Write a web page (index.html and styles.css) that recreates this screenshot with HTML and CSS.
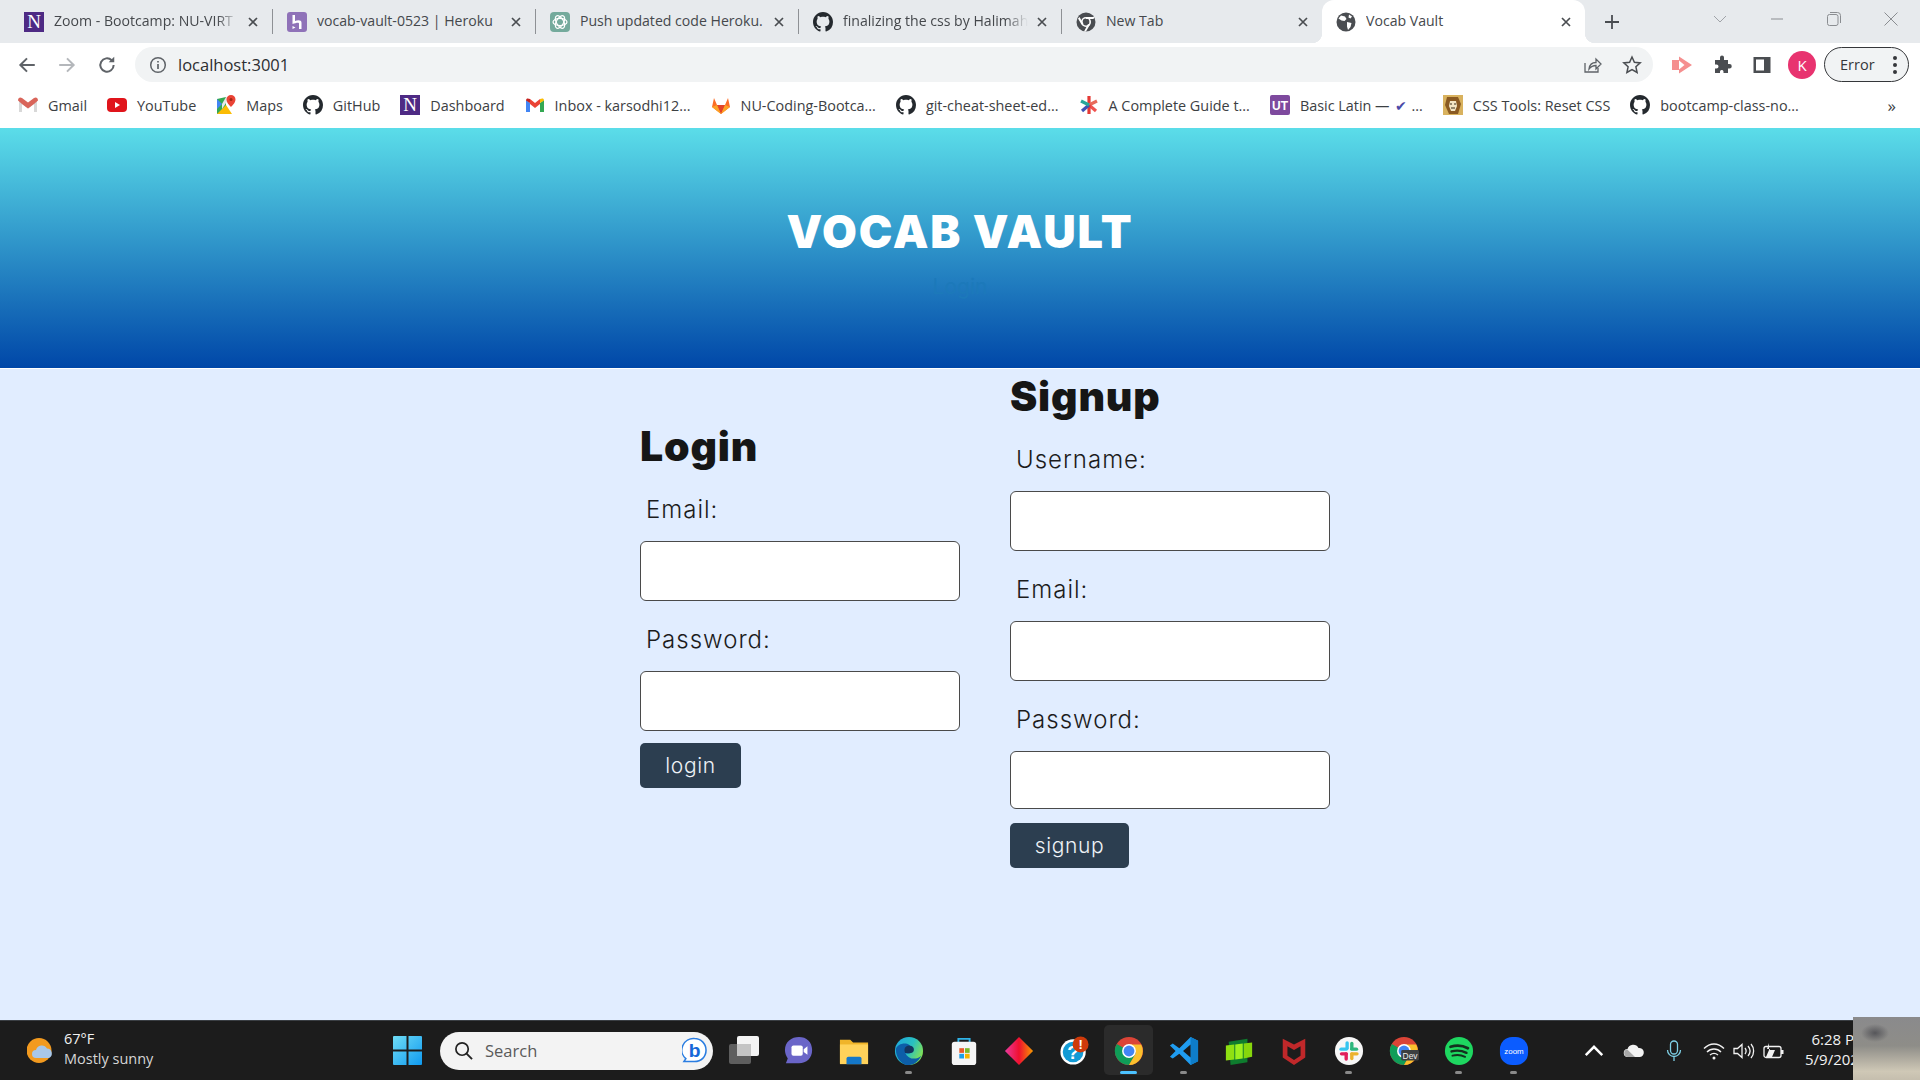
FILE: index.html
```html
<!DOCTYPE html>
<html lang="en">
<head>
    <meta charset="UTF-8">
    <title>Vocab Vault</title>
    <link rel="stylesheet" href="styles.css">
</head>
<body>
    <svg class="icon-defs" width="0" height="0">
        <defs>
            <symbol id="i-github" viewBox="0 0 16 16">
                <path fill="#24292e" d="M8 0C3.58 0 0 3.58 0 8c0 3.54 2.29 6.53 5.47 7.59.4.07.55-.17.55-.38 0-.19-.01-.82-.01-1.49-2.01.37-2.53-.49-2.69-.94-.09-.23-.48-.94-.82-1.13-.28-.15-.68-.52-.01-.53.63-.01 1.08.58 1.23.82.72 1.21 1.87.87 2.33.66.07-.52.28-.87.51-1.07-1.78-.2-3.64-.89-3.64-3.95 0-.87.31-1.59.82-2.15-.08-.2-.36-1.02.08-2.12 0 0 .67-.21 2.2.82.64-.18 1.32-.27 2-.27.68 0 1.36.09 2 .27 1.53-1.04 2.2-.82 2.2-.82.44 1.1.16 1.92.08 2.12.51.56.82 1.27.82 2.15 0 3.07-1.87 3.75-3.65 3.95.29.25.54.73.54 1.48 0 1.07-.01 1.93-.01 2.2 0 .21.15.46.55.38A8.013 8.013 0 0016 8c0-4.42-3.58-8-8-8z"/>
            </symbol>
            <symbol id="i-close" viewBox="0 0 12 12">
                <path d="M2 2l8 8M10 2l-8 8" stroke="#4a4d51" stroke-width="1.7" fill="none"/>
            </symbol>
            <symbol id="i-chrome" viewBox="0 0 32 32">
                <circle cx="16" cy="16" r="15" fill="#db4437"/>
                <path d="M16 16L3 8.5A15 15 0 0 0 16 31l7.5-13z" fill="#0f9d58"/>
                <path d="M16 9h13a15 15 0 0 1-13 22l7.5-13z" fill="#fbc02d"/>
                <circle cx="16" cy="16" r="7.4" fill="#fff"/>
                <circle cx="16" cy="16" r="5.8" fill="#4285f4"/>
            </symbol>
        </defs>
    </svg>

    <!-- Browser tabs -->
    <div class="tabstrip">
        <div class="tab tab-first">
            <svg class="tab-icon" viewBox="0 0 20 20"><rect width="20" height="20" fill="#4e2a84"/><text x="10" y="16" class="nu-letter">N</text></svg>
            <span class="tab-title tab-title-fade">Zoom - Bootcamp: NU-VIRT</span>
            <svg class="tab-close"><use href="#i-close"/></svg>
        </div>
        <span class="tab-sep"></span>
        <div class="tab">
            <svg class="tab-icon" viewBox="0 0 20 20"><rect width="20" height="20" rx="3" fill="#8f72b8"/><path d="M5.500 3h2.500v6c2.500-1 6.500-1.500 6.500 1.800V17H12v-5.500c0-1.500-3-.8-6.500.5zM5.500 14l3 1.500-3 1.500z" fill="#fff"/></svg>
            <span class="tab-title">vocab-vault-0523 | Heroku</span>
            <svg class="tab-close"><use href="#i-close"/></svg>
        </div>
        <span class="tab-sep"></span>
        <div class="tab">
            <svg class="tab-icon" viewBox="0 0 20 20"><rect width="20" height="20" rx="4" fill="#74aa9c"/><g fill="none" stroke="#fff" stroke-width="1.200"><ellipse cx="10" cy="10" rx="7" ry="3.600"/><ellipse cx="10" cy="10" rx="7" ry="3.600" transform="rotate(60 10 10)"/><ellipse cx="10" cy="10" rx="7" ry="3.600" transform="rotate(120 10 10)"/></g></svg>
            <span class="tab-title">Push updated code Heroku.</span>
            <svg class="tab-close"><use href="#i-close"/></svg>
        </div>
        <span class="tab-sep"></span>
        <div class="tab">
            <svg class="tab-icon"><use href="#i-github"/></svg>
            <span class="tab-title tab-title-fade">finalizing the css by Halimah</span>
            <svg class="tab-close"><use href="#i-close"/></svg>
        </div>
        <span class="tab-sep"></span>
        <div class="tab tab-newtab">
            <svg class="tab-icon" viewBox="0 0 20 20"><circle cx="10" cy="10" r="9.500" fill="#4a4d51"/><circle cx="10" cy="10" r="5" fill="#fff"/><circle cx="10" cy="10" r="3.400" fill="#4a4d51"/><path d="M10 5h8.500l-1 2H10zM5.500 12.500L2 6.500l1.500-1.500 4 7zM14 12.500L10 19.500H8l4-7.500z" fill="#fff"/></svg>
            <span class="tab-title">New Tab</span>
            <svg class="tab-close"><use href="#i-close"/></svg>
        </div>
        <div class="tab tab-active">
            <svg class="tab-icon" viewBox="0 0 20 20"><circle cx="10" cy="10" r="9.500" fill="#4a4d51"/><path d="M5 3.500l4 1 1.500 2.500-2 2-3-.5-3-2zM11 10l4.500 1-1 4-2.500 3-1-3.500zM13 2.500l3 2-1.500 2-2-1z" fill="#fff"/></svg>
            <span class="tab-title">Vocab Vault</span>
            <svg class="tab-close"><use href="#i-close"/></svg>
        </div>
        <span class="tab-new">
            <svg viewBox="0 0 16 16"><path d="M8 1v14M1 8h14" stroke="#4a4d51" stroke-width="1.800"/></svg>
        </span>
        <div class="window-controls">
            <span class="window-btn"><svg viewBox="0 0 14 14"><path d="M1 4l6 6 6-6" stroke="#a0a3a8" fill="none"/></svg></span>
            <span class="window-btn"><svg viewBox="0 0 14 14"><path d="M1 7h12" stroke="#8a8d91" fill="none"/></svg></span>
            <span class="window-btn"><svg viewBox="0 0 14 14"><rect x=".5" y="2.500" width="10.500" height="11" rx="2" stroke="#8a8d91" fill="none"/><path d="M3 .5h7.500a3 3 0 0 1 3 3V11" stroke="#8a8d91" fill="none"/></svg></span>
            <span class="window-btn"><svg viewBox="0 0 14 14"><path d="M.5.5l13 13M13.500.5l-13 13" stroke="#8a8d91" fill="none"/></svg></span>
        </div>
    </div>

    <!-- Address bar -->
    <div class="toolbar">
        <div class="nav-btns">
            <span class="nav-btn"><svg viewBox="0 0 18 18"><path d="M16 9H3M9 3L3 9l6 6" stroke="#5f6368" stroke-width="1.800" fill="none"/></svg></span>
            <span class="nav-btn"><svg viewBox="0 0 18 18"><path d="M2 9h13M9 3l6 6-6 6" stroke="#b4b7bb" stroke-width="1.800" fill="none"/></svg></span>
            <span class="nav-btn"><svg viewBox="0 0 18 18"><path d="M15 9a6 6 0 1 1-1.800-4.300" stroke="#5f6368" stroke-width="1.800" fill="none"/><path d="M15.500 1.500v5h-5z" fill="#5f6368"/></svg></span>
        </div>
        <div class="omnibox">
            <svg class="omnibox-info" viewBox="0 0 18 18"><circle cx="9" cy="9" r="7.300" stroke="#5f6368" stroke-width="1.500" fill="none"/><path d="M9 8v5M9 5v1.600" stroke="#5f6368" stroke-width="1.700"/></svg>
            <span class="omnibox-url">localhost:3001</span>
            <span class="omnibox-action"><svg viewBox="0 0 20 20"><path d="M3 8v9h13v-4" stroke="#5f6368" stroke-width="1.300" fill="none"/><path d="M7 14c.5-4 3-6.500 7-6.500V4l5 5-5 5v-3.500c-3 0-5 1-7 3.500z" stroke="#5f6368" stroke-width="1.300" fill="none"/></svg></span>
            <span class="omnibox-action"><svg viewBox="0 0 20 20"><path d="M10 2l2.400 5.300 5.800.6-4.300 3.900 1.200 5.700-5.100-2.900-5.100 2.900 1.200-5.700-4.300-3.900 5.800-.6z" stroke="#4a4d51" stroke-width="1.500" fill="none"/></svg></span>
        </div>
        <div class="toolbar-right">
            <span class="nav-btn"><svg viewBox="0 0 20 20"><path d="M0 5h7V1.500L20 10 7 18.500V15H0z" fill="#f58f8f"/><path d="M7 5.500v9l5.500-4.500z" fill="#fff"/></svg></span>
            <span class="nav-btn"><svg viewBox="0 0 20 20"><path d="M8 2.500a2 2 0 0 1 4 0V5h4v4h1.500a2.200 2.200 0 0 1 0 4.500H16V18h-4.500v-1.500a1.800 1.800 0 0 0-3.500 0V18H3v-4.500h1.500a2 2 0 0 0 0-4H3V5h5z" fill="#4a4d51"/></svg></span>
            <span class="nav-btn"><svg viewBox="0 0 20 20"><rect x="1.500" y="2" width="17" height="16" fill="#4a4d51"/><rect x="4" y="4.500" width="8" height="11" fill="#fff"/></svg></span>
            <span class="avatar">K</span>
            <span class="error-pill">Error<span class="error-dots"><i></i><i></i><i></i></span></span>
        </div>
    </div>

    <!-- Bookmarks -->
    <div class="bookmarks">
        <a class="bookmark"><svg viewBox="0 0 20 16"><path d="M1 15V2l9 7 9-7v13h-3V7l-6 4.600L4 7v8z" fill="#d8d8d8"/><path d="M0 3.500C0 .8 2-.3 4 1l6 4.600L16 1c2-1.300 4-.2 4 2.500L16 7l-6 4.600L4 7z" fill="#d9655a"/></svg>Gmail</a>
        <a class="bookmark"><svg viewBox="0 0 20 20"><rect y="3" width="20" height="14" rx="4" fill="#e0141b"/><path d="M8 7l5 3-5 3z" fill="#fff"/></svg>YouTube</a>
        <a class="bookmark"><svg viewBox="0 0 20 20"><path d="M1 4l9-2v16l-9 1z" fill="#34a853"/><path d="M1 19l9-9 6 9z" fill="#fbbc04"/><path d="M1 4l5 5-5 5z" fill="#4285f4"/><path d="M6 9l4-7h4l-8 12z" fill="#e8e8e8"/><path d="M15 0a4.500 4.500 0 0 0-4.500 4.500C10.500 8 15 12 15 12s4.500-4 4.500-7.500A4.500 4.500 0 0 0 15 0z" fill="#ea4335"/><circle cx="15" cy="4.500" r="1.500" fill="#a52714"/></svg>Maps</a>
        <a class="bookmark"><svg><use href="#i-github"/></svg>GitHub</a>
        <a class="bookmark"><svg viewBox="0 0 20 20"><rect width="20" height="20" fill="#4e2a84"/><text x="10" y="16" class="nu-letter">N</text></svg>Dashboard</a>
        <a class="bookmark"><svg viewBox="0 0 20 16"><path d="M1 15V3l4 3v9z" fill="#4285f4"/><path d="M15 15V6l4-3v12z" fill="#34a853"/><path d="M15 2v5l-5 4-5-4V2l5 4z" fill="#ea4335"/><path d="M1 3.500C1 1 3 1 5 2v4z" fill="#c5221f"/><path d="M15 2c2-1 4-1 4 1.500L15 6z" fill="#fbbc04"/></svg>Inbox - karsodhi12...</a>
        <a class="bookmark"><svg viewBox="0 0 20 20"><path d="M10 19L1 12l2-9 3 7h8l3-7 2 9z" fill="#fc6d26"/><path d="M10 19l-4-9h8z" fill="#e24329"/><path d="M1 12l5-2 4 9zM19 12l-5-2-4 9z" fill="#fca326"/></svg>NU-Coding-Bootca...</a>
        <a class="bookmark"><svg><use href="#i-github"/></svg>git-cheat-sheet-ed...</a>
        <a class="bookmark"><svg viewBox="0 0 20 20"><g stroke-width="3.200"><path d="M10 10V1" stroke="#e53935"/><path d="M10 10l8-4" stroke="#e86a5a"/><path d="M10 10l7 6" stroke="#ef5350"/><path d="M10 10v9" stroke="#e53935"/><path d="M10 10l-7 6" stroke="#3f51b5"/><path d="M10 10L2 6" stroke="#26a69a"/></g></svg>A Complete Guide t...</a>
        <a class="bookmark"><svg viewBox="0 0 20 20"><rect width="20" height="20" rx="2" fill="#7e4a9e"/><text x="10" y="15" class="ut-letters">UT</text></svg>Basic Latin — <span class="bookmark-check">✔</span> ...</a>
        <a class="bookmark"><svg viewBox="0 0 20 20"><rect width="20" height="20" fill="#d9b25e"/><path d="M4 2h11l3 7-3 10H6L2 10z" fill="#8a5a22"/><path d="M7 6h6l1 5-2 5H8l-2-5z" fill="#f3e6c4"/><path d="M7 9h2M11 9h2M8 13h4" stroke="#3a2c18" stroke-width="1.200"/></svg>CSS Tools: Reset CSS</a>
        <a class="bookmark"><svg><use href="#i-github"/></svg>bootcamp-class-no...</a>
        <span class="bookmarks-more">»</span>
    </div>

    <!-- Page -->
    <header class="site-header">
        <h1 class="site-title">VOCAB VAULT</h1>
        <a class="site-link">Login</a>
    </header>

    <main class="auth">
        <form class="auth-form auth-form-login">
            <h2 class="form-title">Login</h2>
            <div class="field">
                <label class="field-label">Email:</label>
                <input class="field-input" type="text">
            </div>
            <div class="field">
                <label class="field-label">Password:</label>
                <input class="field-input" type="password">
            </div>
            <button class="form-btn form-btn-login" type="button">login</button>
        </form>
        <form class="auth-form">
            <h2 class="form-title">Signup</h2>
            <div class="field">
                <label class="field-label">Username:</label>
                <input class="field-input" type="text">
            </div>
            <div class="field">
                <label class="field-label">Email:</label>
                <input class="field-input" type="text">
            </div>
            <div class="field">
                <label class="field-label">Password:</label>
                <input class="field-input field-input-short" type="password">
            </div>
            <button class="form-btn form-btn-signup" type="button">signup</button>
        </form>
    </main>

    <!-- Windows taskbar -->
    <footer class="taskbar">
        <div class="weather">
            <svg class="weather-icon" viewBox="0 0 27 27"><circle cx="12" cy="13.500" r="12.500" fill="#f29a1f"/><path d="M9 21a4 4 0 0 1 0-8 6 6 0 0 1 11-1.500A5 5 0 0 1 22 21z" fill="#a9c7e8"/></svg>
            <div class="weather-text">
                <span class="weather-temp">67°F</span>
                <span class="weather-desc">Mostly sunny</span>
            </div>
        </div>
        <span class="start-btn">
            <svg viewBox="0 0 29 29"><defs><linearGradient id="win" x1="0" y1="0" x2="1" y2="1"><stop offset="0" stop-color="#6fdcf5"/><stop offset="1" stop-color="#0f9af0"/></linearGradient></defs><path d="M0 1a1 1 0 0 1 1-1h12.500v13.500H0zM15.500 0H28a1 1 0 0 1 1 1v12.500H15.500zM0 15.500h13.500V29H1a1 1 0 0 1-1-1zM15.500 15.500H29V28a1 1 0 0 1-1 1H15.500z" fill="url(#win)"/></svg>
        </span>
        <div class="task-search">
            <svg class="task-search-icon" viewBox="0 0 20 20"><circle cx="8.500" cy="8.500" r="6.500" stroke="#222" stroke-width="1.800" fill="none"/><path d="M13 13l6 6" stroke="#222" stroke-width="2"/></svg>
            <span class="task-search-text">Search</span>
            <svg class="task-search-bing" viewBox="0 0 26 28"><path d="M13 1a12 12 0 0 1 12 12c0 7-5 12-12 12H2l2-3A12 12 0 0 1 13 1z" fill="#fff" stroke="#2a7de1" stroke-width="1.600"/><text x="13" y="20" class="bing-letter">b</text></svg>
        </div>
        <div class="task-apps">
            <span class="task-app"><svg viewBox="0 0 30 30"><rect y="8" width="22" height="20" rx="2" fill="#5e5e5e"/><rect x="8" width="22" height="20" rx="2" fill="#f4f4f4"/><rect x="8" y="8" width="14" height="12" fill="#c4c4c4"/></svg></span>
            <span class="task-app"><svg viewBox="0 0 32 32"><path d="M16 1c8 0 14 5 14 14s-6 14-14 14H2l2-5c-2-3-3-6-3-9C1 6 8 1 16 1z" fill="#6a65c8"/><rect x="8" y="10" width="12" height="11" rx="2" fill="#fff"/><path d="M21 14l4-3v9l-4-3z" fill="#fff"/></svg></span>
            <span class="task-app"><svg viewBox="0 0 32 32"><path d="M1 4h11l3 3h16v22H1z" fill="#f0b429"/><path d="M1 9h30v21H1z" fill="#ffd25a"/><path d="M10 22h12a2 2 0 0 1 2 2v6H8v-6a2 2 0 0 1 2-2z" fill="#1477c9"/></svg></span>
            <span class="task-app task-app-open"><svg viewBox="0 0 32 32"><defs><linearGradient id="edge" x1="0" y1="0" x2="1" y2=".5"><stop offset="0" stop-color="#1da5e0"/><stop offset=".6" stop-color="#29c0c0"/><stop offset="1" stop-color="#7ce05c"/></linearGradient></defs><circle cx="16" cy="16" r="15" fill="url(#edge)"/><path d="M2 14c2-7 16-9 17 1 .3 3-4 5-7 3 3 7 12 8 17 3-3 7-9 10-14 10C9 31 2 24 2 14z" fill="#0d5ea8"/><path d="M12 18c-2-4 0-8 4-8s6 3 5 6c-1 2-4 3-6 2z" fill="#13355f"/></svg></span>
            <span class="task-app"><svg viewBox="0 0 32 32"><path d="M10 8V3h12v5" stroke="#2fb4e8" stroke-width="2" fill="none"/><rect x="3" y="6" width="26" height="25" rx="3" fill="#f5f5f5"/><rect x="11" y="13" width="5" height="5" fill="#ea5a2a"/><rect x="17" y="13" width="5" height="5" fill="#7cb928"/><rect x="11" y="19" width="5" height="5" fill="#1ea0e8"/><rect x="17" y="19" width="5" height="5" fill="#f7b500"/></svg></span>
            <span class="task-app"><svg viewBox="0 0 32 32"><defs><linearGradient id="diamond" x1="0" y1="0" x2="1" y2="0"><stop offset="0" stop-color="#ea3a9f"/><stop offset=".5" stop-color="#f0102f"/><stop offset="1" stop-color="#f79a00"/></linearGradient></defs><path d="M16 1l15 15-15 15L1 16z" fill="url(#diamond)"/></svg></span>
            <span class="task-app"><svg viewBox="0 0 32 32"><circle cx="15" cy="17" r="13.500" fill="#fff"/><circle cx="15" cy="17" r="11" fill="#139bd6"/><text x="15" y="24" class="help-letter">?</text><circle cx="23" cy="9" r="8.500" fill="#cf3a0a"/><text x="23" y="14" class="badge-letter">!</text></svg></span>
            <span class="task-app task-app-active"><svg><use href="#i-chrome"/></svg></span>
            <span class="task-app task-app-open"><svg viewBox="0 0 32 32"><path d="M23 1l8 4v22l-8 4-12-12-7 5-3-2 6-6-6-6 3-2 7 5z" fill="#1f9cf0"/><path d="M23 1v30l8-4V5z" fill="#0e7dc9"/><path d="M23 9l-8 7 8 7z" fill="#1a1a1a"/></svg></span>
            <span class="task-app"><svg viewBox="0 0 32 32"><path d="M5 6l20-3v25L7 31z" fill="#0e7c2e"/><path d="M2 10l9-1v16l-9 1z" fill="#8fe012"/><path d="M12 9l8-1v16l-8 1z" fill="#9cf01e"/><path d="M21 8l9-1v15l-9 2z" fill="#86d60c"/></svg></span>
            <span class="task-app"><svg viewBox="0 0 32 32"><path d="M4 3l12 6 12-6v20l-12 8-12-8zM9 11v10l7 4.500 7-4.500V11l-7 4z" fill="#c0282a" fill-rule="evenodd"/></svg></span>
            <span class="task-app task-app-open"><svg viewBox="0 0 32 32"><circle cx="16" cy="16" r="15" fill="#f7f7f7"/><g stroke-width="3.600" stroke-linecap="round"><path d="M14 7.500v5.500" stroke="#36c5f0"/><path d="M7.500 14H13" stroke="#36c5f0"/><path d="M19 8v5.500" stroke="#2eb67d"/><path d="M19 14h5" stroke="#2eb67d"/><path d="M19 19h5.500" stroke="#ecb22e"/><path d="M19 19v5" stroke="#ecb22e"/><path d="M13 19H8" stroke="#e01e5a"/><path d="M13 19v5.500" stroke="#e01e5a"/></g></svg></span>
            <span class="task-app"><svg viewBox="0 0 32 32"><use href="#i-chrome" width="32" height="32"/><rect x="13" y="15" width="19" height="11" rx="1.500" fill="#3c3f41"/><text x="22.500" y="24" class="dev-letters">Dev</text></svg></span>
            <span class="task-app task-app-open"><svg viewBox="0 0 32 32"><circle cx="16" cy="16" r="15" fill="#1ed760"/><g stroke="#14301f" fill="none" stroke-linecap="round"><path d="M7 11.500c6-2 13-1.500 18.500 1.500" stroke-width="3"/><path d="M8 16.500c5-1.500 11-1 16 1.500" stroke-width="2.500"/><path d="M9 21c4.500-1.200 9.500-.8 13.500 1.200" stroke-width="2"/></g></svg></span>
            <span class="task-app task-app-open"><svg viewBox="0 0 32 32"><rect x="1" y="1" width="30" height="30" rx="13" fill="#0b5cff"/><text x="16" y="19" class="zoom-letters">zoom</text></svg></span>
        </div>
        <div class="tray">
            <span class="tray-icon"><svg viewBox="0 0 16 16"><path d="M2 11l6-6 6 6" stroke="#fff" stroke-width="1.800" fill="none"/></svg></span>
            <span class="tray-icon"><svg viewBox="0 0 22 14"><path d="M5 13a4 4 0 0 1-.5-8A6 6 0 0 1 15.500 4 4.500 4.500 0 0 1 17 13z" fill="#f2f2f2"/><path d="M5 13a4 4 0 0 1-1-7.800L12 13z" fill="#a8a8a8"/></svg></span>
            <span class="tray-icon"><svg viewBox="0 0 16 22"><rect x="4.500" y="1" width="7" height="13" rx="3.500" stroke="#7fd0e6" stroke-width="1.300" fill="none"/><path d="M1.500 10a6.500 6.500 0 0 0 13 0M8 16.500V21" stroke="#7fd0e6" stroke-width="1.300" fill="none"/></svg></span>
            <div class="tray-group">
                <span class="tray-icon"><svg viewBox="0 0 22 18"><g stroke="#f2f2f2" stroke-width="1.400" fill="none"><path d="M1 6.500c6-6 14-6 20 0"/><path d="M4 10c4-4 10-4 14 0"/><path d="M7 13c2.500-2 5.500-2 8 0"/></g><circle cx="11" cy="16" r="1.500" fill="#f2f2f2"/></svg></span>
                <span class="tray-icon"><svg viewBox="0 0 22 18"><path d="M1 6.500h3.500L9 2.500v13l-4.500-4H1z" stroke="#f2f2f2" stroke-width="1.300" fill="none"/><path d="M12 6c1.500 2 1.500 4 0 6M15 4c2.500 3 2.500 7 0 10M18 2c3.500 4 3.500 10 0 14" stroke="#f2f2f2" stroke-width="1.300" fill="none"/></svg></span>
                <span class="tray-icon"><svg viewBox="0 0 22 16"><rect x="1" y="3.500" width="17" height="11" rx="2" stroke="#f2f2f2" stroke-width="1.300" fill="none"/><rect x="18" y="7" width="2.500" height="4" fill="#f2f2f2"/><path d="M3 14l3-7h6l-3 7zM6 0l-2 6h3l-1 3" fill="#f2f2f2"/></svg></span>
            </div>
        </div>
        <div class="clock">
            <span>6:28 PM</span>
            <span>5/9/2023</span>
        </div>
        <div class="peek-thumb"></div>
    </footer>
</body>
</html>
```

FILE: styles.css
```css
:root {
    --tab-bg: #e7eaed;
    --omni-bg: #f1f3f4;
    --chrome-text: #45484c;
    --page-bg: #e1edff;
    --dark-btn: #2c3e50;
    --ink: #161616;
    --task-bg: #1c1c1c;
}

* {
    margin: 0;
    padding: 0;
    box-sizing: border-box;
}

body {
    height: 100vh;
    display: flex;
    flex-direction: column;
    overflow: hidden;
    background-color: var(--page-bg);
    font-family: 'Open Sans', 'Noto Sans', sans-serif;
}

.icon-defs {
    position: absolute;
}

/* Tabs */
.tabstrip {
    display: flex;
    align-items: center;
    height: 43px;
    padding-left: 10px;
    background-color: var(--tab-bg);
}

.tab {
    position: relative;
    display: flex;
    align-items: center;
    width: 262px;
    height: 43px;
    padding: 0 13px 0 14px;
    color: var(--chrome-text);
    font-size: 14.1px;
}

.tab-newtab {
    width: 260px;
}

.tab-active {
    width: 263px;
    background-color: #fff;
    border-radius: 12px 12px 0 0;
}

.tab-active::before,
.tab-active::after {
    content: "";
    position: absolute;
    bottom: 0;
    width: 10px;
    height: 10px;
}

.tab-active::before {
    left: -10px;
    background: radial-gradient(circle at 0 0, var(--tab-bg) 10px, #fff 10.5px);
}

.tab-active::after {
    right: -10px;
    background: radial-gradient(circle at 100% 0, var(--tab-bg) 10px, #fff 10.5px);
}

.tab-icon {
    flex: none;
    width: 20px;
    height: 20px;
    margin-right: 10px;
}

.tab-title {
    flex: 1;
    margin-top: -2px;
    overflow: hidden;
    white-space: nowrap;
}

.tab-title-fade {
    -webkit-mask-image: linear-gradient(to right, #000 88%, transparent);
    mask-image: linear-gradient(to right, #000 88%, transparent);
}

.tab-close {
    flex: none;
    width: 12px;
    height: 12px;
    margin-left: 8px;
}

.tab-sep {
    flex: none;
    width: 1px;
    height: 25px;
    background-color: #8e9195;
}

.tab-new {
    display: flex;
    margin-left: 19px;
}

.tab-new svg {
    width: 16px;
    height: 16px;
}

.window-controls {
    display: flex;
    margin-left: auto;
    margin-right: 1px;
}

.window-btn {
    display: flex;
    justify-content: center;
    width: 57px;
    margin-top: -6px;
}

.window-btn svg {
    width: 14px;
    height: 14px;
}

.nu-letter {
    fill: #fff;
    font-family: 'Liberation Serif', serif;
    font-size: 19px;
    text-anchor: middle;
}

.ut-letters {
    fill: #fff;
    font-family: 'Liberation Sans', sans-serif;
    font-size: 12px;
    font-weight: 700;
    text-anchor: middle;
}

/* Toolbar */
.toolbar {
    display: flex;
    align-items: center;
    height: 43px;
    padding-left: 7px;
    background-color: #fff;
}

.nav-btns {
    display: flex;
    margin-right: 8px;
}

.nav-btn {
    display: flex;
    justify-content: center;
    align-items: center;
    width: 40px;
    height: 35px;
}

.nav-btn svg {
    width: 20px;
    height: 20px;
}

.omnibox {
    flex: 1;
    display: flex;
    align-items: center;
    height: 35px;
    padding: 0 1px 0 14px;
    background-color: var(--omni-bg);
    border-radius: 18px;
}

.omnibox-info {
    width: 18px;
    height: 18px;
    margin-right: 11px;
}

.omnibox-url {
    flex: 1;
    color: #2c2e31;
    font-size: 16.5px;
}

.omnibox-action {
    display: flex;
    justify-content: center;
    width: 40px;
}

.omnibox-action svg {
    width: 20px;
    height: 20px;
}

.toolbar-right {
    display: flex;
    align-items: center;
    width: 267px;
    padding-left: 9px;
}

.avatar {
    display: flex;
    justify-content: center;
    align-items: center;
    width: 28px;
    height: 28px;
    margin: 0 6px;
    background-color: #e8336f;
    border-radius: 50%;
    color: #fff;
    font-size: 15px;
}

.error-pill {
    display: flex;
    align-items: center;
    width: 85px;
    height: 35px;
    margin-left: 2px;
    padding-left: 15px;
    background-color: var(--omni-bg);
    border: 1.5px solid #35373a;
    border-radius: 18px;
    color: #35373a;
    font-size: 14.5px;
}

.error-dots {
    display: flex;
    flex-direction: column;
    gap: 3px;
    margin-left: 18px;
}

.error-dots i {
    width: 4px;
    height: 4px;
    background-color: #35373a;
    border-radius: 50%;
}

/* Bookmarks */
.bookmarks {
    display: flex;
    align-items: center;
    gap: 20px;
    height: 42px;
    padding: 0 0 4px 18px;
    background-color: #fff;
    color: #3c4043;
    font-size: 14.4px;
}

.bookmark {
    display: flex;
    align-items: center;
    white-space: nowrap;
}

.bookmark svg {
    flex: none;
    width: 20px;
    height: 20px;
    margin-right: 10px;
}

.bookmark-check {
    margin: 0 5px;
    color: #4a4aa8;
}

.bookmarks-more {
    margin-left: auto;
    margin-right: 24px;
    font-size: 17px;
}

/* Page header */
.site-header {
    display: flex;
    flex-direction: column;
    align-items: center;
    height: 241px;
    padding-top: 74px;
    background: linear-gradient(#5bdde9, #0047a8);
    border-bottom: 1px solid #fff;
}

.site-title {
    color: #fff;
    font-family: 'Inter', sans-serif;
    font-size: 45px;
    font-weight: 900;
    line-height: 60px;
    letter-spacing: 1.8px;
}

.site-link {
    margin-top: 12px;
    color: #1c79ba;
    font-family: 'Inter', sans-serif;
    font-size: 21px;
}

/* Forms */
.auth {
    flex: 1;
    display: flex;
    gap: 50px;
    padding: 2px 0 0 640px;
}

.auth-form {
    width: 320px;
}

.auth-form-login {
    margin-top: 50px;
}

.form-title {
    color: var(--ink);
    font-family: 'Inter', sans-serif;
    font-size: 41px;
    font-weight: 900;
    line-height: 50px;
    letter-spacing: .8px;
}

.field {
    margin-top: 23px;
}

.field-label {
    display: block;
    margin-bottom: 15px;
    padding-left: 6px;
    color: #1c1c1c;
    font-family: 'Inter', sans-serif;
    font-size: 24px;
    font-weight: 300;
    line-height: 32px;
    letter-spacing: 1px;
}

.field-input {
    display: block;
    width: 100%;
    height: 60px;
    background-color: #fff;
    border: 1px solid #4a4a4a;
    border-radius: 6px;
}

.field-input-short {
    height: 58px;
}

.form-btn {
    display: block;
    height: 45px;
    margin-top: 12px;
    background-color: var(--dark-btn);
    border: none;
    border-radius: 5px;
    color: #eef2f6;
    font-family: 'Inter', sans-serif;
    font-size: 21px;
    font-weight: 300;
    letter-spacing: .6px;
}

.form-btn-login {
    width: 101px;
}

.form-btn-signup {
    width: 119px;
    margin-top: 14px;
}

/* Taskbar */
.taskbar {
    position: relative;
    flex: none;
    display: flex;
    align-items: center;
    height: 60px;
    background-color: var(--task-bg);
    border-top: 1px solid #3a3e43;
    color: #f2f2f2;
}

.weather {
    display: flex;
    align-items: center;
    width: 380px;
    padding-left: 27px;
}

.weather-icon {
    width: 27px;
    height: 27px;
    margin-right: 10px;
}

.weather-text {
    display: flex;
    flex-direction: column;
    margin-top: -3px;
    font-size: 14.5px;
    line-height: 20px;
}

.weather-desc {
    color: #d6d6d6;
}

.start-btn {
    display: flex;
    justify-content: center;
    width: 55px;
}

.start-btn svg {
    width: 29px;
    height: 29px;
}

.task-search {
    display: flex;
    align-items: center;
    width: 273px;
    height: 38px;
    margin-left: 5px;
    padding: 0 6px 0 14px;
    background-color: #f3f3f3;
    border-radius: 19px;
}

.task-search-icon {
    width: 19px;
    height: 19px;
    margin-right: 12px;
}

.task-search-text {
    flex: 1;
    color: #5a5a5a;
    font-size: 16.5px;
}

.task-search-bing {
    width: 25px;
    height: 28px;
}

.bing-letter {
    fill: #1668d8;
    font-family: 'Liberation Sans', sans-serif;
    font-size: 20px;
    font-weight: 700;
    text-anchor: middle;
}

.task-apps {
    display: flex;
    margin-left: 3px;
}

.task-app {
    position: relative;
    display: flex;
    justify-content: center;
    align-items: center;
    width: 55px;
    height: 59px;
}

.task-app svg {
    position: relative;
    width: 30px;
    height: 30px;
}

.task-app-open::after,
.task-app-active::after {
    content: "";
    position: absolute;
    bottom: 6px;
    left: 24px;
    width: 7px;
    height: 3px;
    background-color: #8a8a8a;
    border-radius: 2px;
}

.task-app-active::before {
    content: "";
    position: absolute;
    top: 4px;
    left: 3px;
    width: 49px;
    height: 50px;
    background-color: #2b2b2b;
    border-radius: 5px;
}

.task-app-active::after {
    left: 19px;
    width: 17px;
    background-color: #4cc2ff;
}

.help-letter {
    fill: #fff;
    font-family: 'Liberation Sans', sans-serif;
    font-size: 20px;
    font-weight: 700;
    text-anchor: middle;
}

.badge-letter {
    fill: #fff;
    font-family: 'Liberation Sans', sans-serif;
    font-size: 14px;
    font-weight: 700;
    text-anchor: middle;
}

.dev-letters {
    fill: #eee;
    font-family: 'Liberation Sans', sans-serif;
    font-size: 9px;
    text-anchor: middle;
}

.zoom-letters {
    fill: #fff;
    font-family: 'Liberation Sans', sans-serif;
    font-size: 8.5px;
    text-anchor: middle;
}

.tray {
    display: flex;
    align-items: center;
    gap: 10px;
    margin-left: 38px;
}

.tray-group {
    display: flex;
}

.tray-icon {
    display: flex;
    justify-content: center;
    width: 30px;
}

.tray-icon svg {
    width: 22px;
    height: 22px;
}

.clock {
    display: flex;
    flex-direction: column;
    align-items: flex-end;
    margin-top: -3px;
    margin-left: 16px;
    font-size: 15px;
    line-height: 20px;
}

.peek-thumb {
    position: absolute;
    top: -4px;
    right: 0;
    width: 67px;
    height: 64px;
    background:
        radial-gradient(ellipse 14px 9px at 22px 16px, #56565a, transparent),
        linear-gradient(#8a8a8c, #8e8d88 45%, #cfc8b6 85%, #c4bdad);
}
```
